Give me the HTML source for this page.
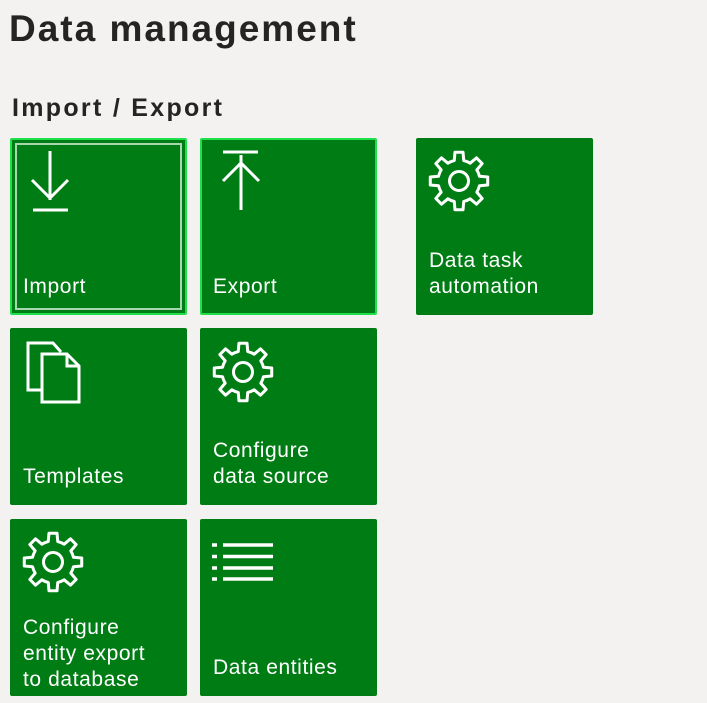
<!DOCTYPE html>
<html><head><meta charset="utf-8"><style>
body{margin:0;background:#f3f2f1;font-family:"Liberation Sans",sans-serif;width:707px;height:703px;overflow:hidden;position:relative}
h1{position:absolute;left:9px;top:8px;margin:0;font-size:37px;font-weight:bold;color:#252423;letter-spacing:2px}
h2{position:absolute;left:12px;top:94px;margin:0;font-size:25px;font-weight:bold;color:#252423;letter-spacing:2.3px}
.t{position:absolute;width:177px;height:177px;background:#007c14;border-radius:2px;box-sizing:border-box}
.t .l{position:absolute;left:13px;bottom:15px;color:#fff;font-size:21px;line-height:26px;letter-spacing:0.6px}
.t svg{position:absolute;left:0;top:0}
.sel{border:2px solid #1fe04a}
.sel .l{left:11px;bottom:13px}
.sel svg{left:-2px;top:-2px}
.in{position:absolute;left:3px;top:3px;right:3px;bottom:3px;border:2px solid #a8d6ae}
</style></head><body>
<h1>Data management</h1>
<h2>Import / Export</h2>

<div class="t sel" style="left:10px;top:138px"><div class="in"></div>
<svg width="177" height="177" fill="none" stroke="#fff" stroke-width="3"><path d="M40 13V62M22 42L40 60L58 42M23 72H58"/></svg>
<div class="l">Import</div></div>

<div class="t sel" style="left:200px;top:138px">
<svg width="177" height="177" fill="none" stroke="#fff" stroke-width="3"><path d="M23 14H58M41 17V72M23 43L41 25L59 43"/></svg>
<div class="l">Export</div></div>

<div class="t" style="left:416px;top:138px">
<svg width="177" height="177" fill="none" stroke="#fff" stroke-width="3"><path class="g" transform="translate(43,43)"/><circle cx="43" cy="43" r="9.5"/></svg>
<div class="l">Data task<br>automation</div></div>

<div class="t" style="left:10px;top:328px">
<svg width="177" height="177" fill="none" stroke="#fff" stroke-width="3"><path d="M32 62H18V15H43L51 24"/><path d="M32 26H57L69 38V74H32Z"/><path d="M57 26V38H69"/></svg>
<div class="l">Templates</div></div>

<div class="t" style="left:200px;top:328px">
<svg width="177" height="177" fill="none" stroke="#fff" stroke-width="3"><path class="g" transform="translate(43,44)"/><circle cx="43" cy="44" r="9.5"/></svg>
<div class="l">Configure<br>data source</div></div>

<div class="t" style="left:10px;top:519px">
<svg width="177" height="177" fill="none" stroke="#fff" stroke-width="3"><path class="g" transform="translate(43,43)"/><circle cx="43" cy="43" r="9.5"/></svg>
<div class="l" style="bottom:3px">Configure<br>entity export<br>to database</div></div>

<div class="t" style="left:200px;top:519px">
<svg width="177" height="177" fill="none" stroke="#fff" stroke-width="3.5"><path d="M12 26H17M23 26H73M12 37.5H17M23 37.5H73M12 49H17M23 49H73M12 60H17M23 60H73"/></svg>
<div class="l">Data entities</div></div>

<script>
var d="";var R=29,r=21;
function p(rad,deg){var a=(deg-90)*Math.PI/180;return (rad*Math.cos(a)).toFixed(2)+" "+(rad*Math.sin(a)).toFixed(2);}
for(var i=0;i<8;i++){var a=i*45;d+=(i?"L":"M")+p(r,a-13)+"L"+p(R,a-8)+"L"+p(R,a+8)+"L"+p(r,a+13)+"A"+r+" "+r+" 0 0 1 "+p(r,a+45-13);}
d+="Z";
document.querySelectorAll(".g").forEach(function(e){e.setAttribute("d",d);e.setAttribute("stroke-linejoin","round");});
</script>
</body></html>
